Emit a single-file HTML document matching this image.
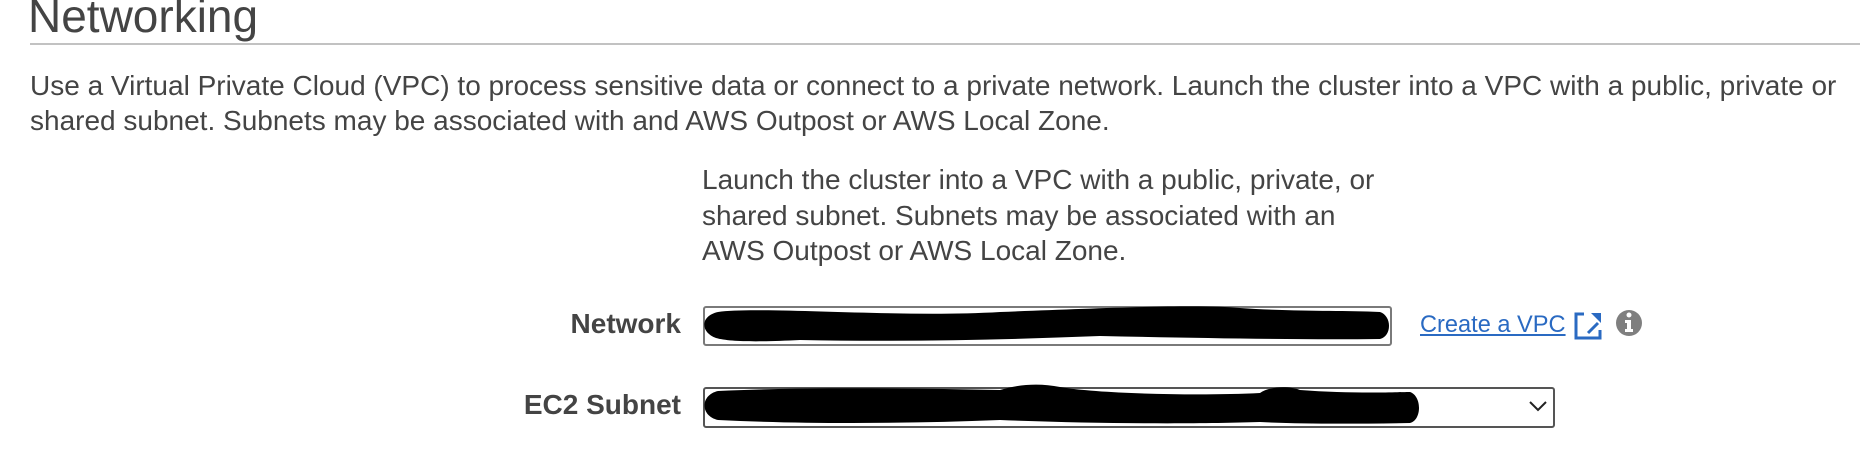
<!DOCTYPE html>
<html><head><meta charset="utf-8"><style>
body{margin:0;width:1860px;height:458px;overflow:hidden;background:#fff;font-family:"Liberation Sans",Arial,sans-serif;color:#444;position:relative}
.a{position:absolute;white-space:nowrap}
h1{position:absolute;left:28px;top:-10px;margin:0;font-weight:normal;font-size:46px;color:#444;line-height:53px}
.rule{position:absolute;left:30px;right:0;top:43px;height:2px;background:#c2c2c2}
.p{font-size:28px;left:30px;line-height:32px}
.h{font-size:28px;left:702px;line-height:32px}
.lbl{font-size:28px;font-weight:bold;right:1179px;color:#444;line-height:32px}
.box{position:absolute;box-sizing:border-box;border:2px solid #7a7a7a;border-radius:3px;background:#fff}
a{color:#2a6ac2;font-size:23.6px}
</style></head><body>
<h1>Networking</h1>
<div class="rule"></div>
<div class="a p" style="top:70px">Use a Virtual Private Cloud (VPC) to process sensitive data or connect to a private network. Launch the cluster into a VPC with a public, private or</div>
<div class="a p" style="top:105px">shared subnet. Subnets may be associated with and AWS Outpost or AWS Local Zone.</div>
<div class="a h" style="top:164px">Launch the cluster into a VPC with a public, private, or</div>
<div class="a h" style="top:200px">shared subnet. Subnets may be associated with an</div>
<div class="a h" style="top:235px">AWS Outpost or AWS Local Zone.</div>
<div class="a lbl" style="top:308px">Network</div>
<div class="a lbl" style="top:389px">EC2 Subnet</div>
<div class="box" style="left:703px;top:306px;width:689px;height:40px"></div>
<div class="box" style="left:703px;top:387px;width:852px;height:41px;border-color:#555"></div>
<svg class="a" style="left:0;top:0" width="1860" height="458">
<path d="M718 312 C760 306 900 318 1000 312 C1100 308 1200 304 1240 308 C1300 312 1340 310 1380 312 C1392 316 1392 336 1380 339 C1300 340 1200 338 1100 336 C1000 340 900 342 800 340 C760 342 730 342 716 338 C700 332 700 316 718 312Z" fill="#000"/>
<path d="M718 391 C800 387 900 388 1000 390 C1020 384 1040 383 1060 387 C1100 394 1200 396 1260 393 C1270 386 1290 386 1300 390 C1350 394 1400 392 1410 392 C1422 396 1422 420 1410 423 C1350 424 1300 424 1260 422 C1200 424 1100 424 1000 420 C900 424 800 424 718 420 C700 416 700 395 718 391Z" fill="#000"/>
<path d="M1530 402 L1538 410 L1546 402" fill="none" stroke="#222" stroke-width="2"/>
<g stroke="#2a6ac2" stroke-width="3" fill="none">
<path d="M1584 314 H1576 V338 H1600 V330"/>
<path d="M1588 333 L1598 323"/>
</g>
<path d="M1591 313 H1601 V323 Z" fill="#2a6ac2"/>
<circle cx="1629" cy="323" r="13" fill="#7f7f7f"/>
<circle cx="1629" cy="315" r="2.5" fill="#fff"/>
<path d="M1625 320 H1631 V329 H1633 V332 H1625 V329 H1627 V323 H1625Z" fill="#fff"/>
</svg>
<a class="a" style="left:1420px;top:312px" href="#">Create a VPC</a>
</body></html>
